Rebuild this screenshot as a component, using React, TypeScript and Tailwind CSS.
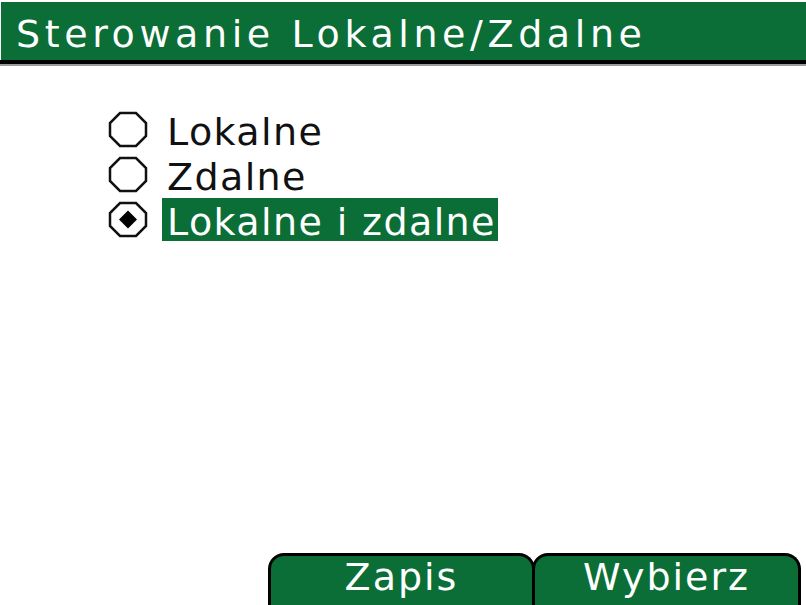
import React from "react";

const GREEN = "bg-[#0a6e36]";

function Radio({ checked }: { checked: boolean }) {
  return (
    <svg width="40" height="37" viewBox="0 0 40 37" className="shrink-0">
      <polygon
        points="12,2 28,2 38,12 38,25 28,35 12,35 2,25 2,12"
        fill="white"
        stroke="#111"
        strokeWidth="2.5"
      />
      {checked && <polygon points="20,9.5 29,18.5 20,27.5 11,18.5" fill="#000" />}
    </svg>
  );
}

const OPTIONS = [
  { label: "Lokalne", checked: false },
  { label: "Zdalne", checked: false },
  { label: "Lokalne i zdalne", checked: true },
];

export default function App() {
  return (
    <div
      className="w-[806px] h-[605px] bg-white flex flex-col overflow-hidden"
      style={{ fontFamily: '"DejaVu Sans", Verdana, sans-serif' }}
    >
      {/* Header */}
      <div className="pt-[2px]">
        <div className={`h-[58px] ml-[1px] ${GREEN} overflow-hidden pl-[15px]`}>
          <span className="block text-[38px] leading-[64px] tracking-[4.6px] text-white whitespace-nowrap">
            Sterowanie Lokalne/Zdalne
          </span>
        </div>
        <div className="h-[4px] bg-black" />
        <div className="h-[2px] bg-[#9a9a9a]" />
      </div>

      {/* Options */}
      <div className="flex-1 pt-[41px] pl-[108px]">
        {OPTIONS.map(o => (
          <div key={o.label} className="h-[45px] flex items-center">
            <Radio checked={o.checked} />
            <span
              className={`ml-[14px] pl-[5px] pr-[2px] h-[43px] text-[38px] leading-[48px] tracking-[1.4px] whitespace-nowrap ${
                o.checked ? `${GREEN} text-white` : "text-[#111]"
              }`}
            >
              {o.label}
            </span>
          </div>
        ))}
      </div>

      {/* Softkeys */}
      <div className="h-[52px] flex justify-end pr-[5px]">
        <div className={`w-[267px] ${GREEN} border-[3px] border-b-0 border-black rounded-t-[16px] text-center text-white text-[38px] leading-[42px] tracking-[2px]`}>
          Zapis
        </div>
        <div className={`w-[269px] -ml-[3px] ${GREEN} border-[3px] border-b-0 border-black rounded-t-[16px] text-center text-white text-[38px] leading-[42px] tracking-[2px]`}>
          Wybierz
        </div>
      </div>
    </div>
  );
}
